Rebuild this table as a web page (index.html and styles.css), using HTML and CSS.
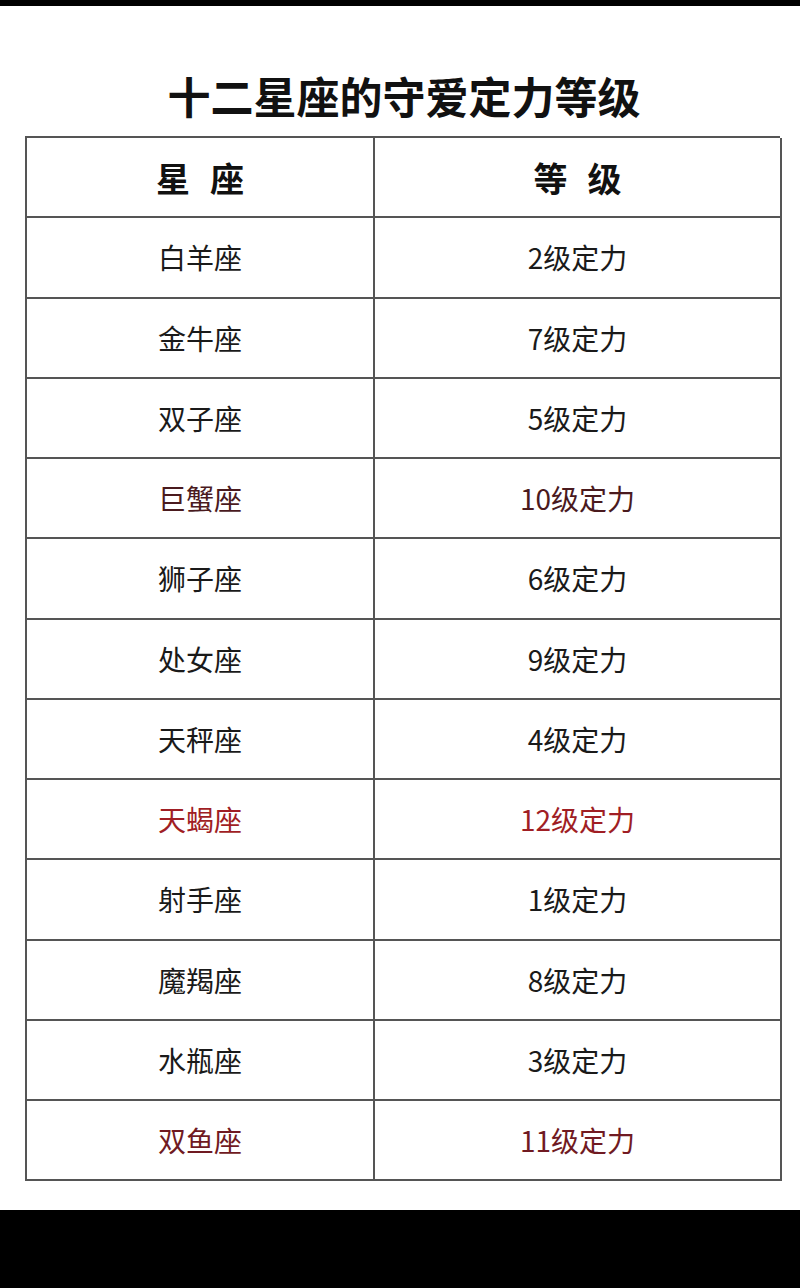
FILE: index.html
```html
<!DOCTYPE html>
<html lang="zh-CN">
<head>
<meta charset="utf-8">
<title>十二星座的守爱定力等级</title>
<link rel="stylesheet" href="styles.css">
</head>
<body>
<div class="topbar"></div>
<main class="page">
  <h1 class="title">十二星座的守爱定力等级</h1>
  <div class="table">
    <div class="cell head"><span>星</span><span>座</span></div>
    <div class="cell head"><span>等</span><span>级</span></div>

    <div class="cell">白羊座</div><div class="cell">2级定力</div>
    <div class="cell">金牛座</div><div class="cell">7级定力</div>
    <div class="cell">双子座</div><div class="cell">5级定力</div>
    <div class="cell cancer">巨蟹座</div><div class="cell cancer">10级定力</div>
    <div class="cell">狮子座</div><div class="cell">6级定力</div>
    <div class="cell">处女座</div><div class="cell">9级定力</div>
    <div class="cell">天秤座</div><div class="cell">4级定力</div>
    <div class="cell scorpio">天蝎座</div><div class="cell scorpio">12级定力</div>
    <div class="cell">射手座</div><div class="cell">1级定力</div>
    <div class="cell">魔羯座</div><div class="cell">8级定力</div>
    <div class="cell">水瓶座</div><div class="cell">3级定力</div>
    <div class="cell pisces">双鱼座</div><div class="cell pisces">11级定力</div>
  </div>
</main>
<div class="bottombar"></div>
</body>
</html>
```

FILE: styles.css
```css
html, body {
  margin: 0;
  padding: 0;
  background: #000;
}
body {
  width: 800px;
  height: 1288px;
  overflow: hidden;
  font-family: "Noto Sans CJK SC", "Noto Sans", sans-serif;
  color: #141414;
}
.topbar {
  height: 6px;
  background: #000;
}
.page {
  background: #fff;
  height: 1204px;
  padding-top: 59px;
  box-sizing: border-box;
}
.title {
  margin: 0;
  padding-left: 8px;
  height: 71px;
  line-height: 60px;
  font-size: 43px;
  font-weight: 700;
  text-align: center;
  color: #111;
}
.table {
  margin-left: 25px;
  width: 755px;
  display: grid;
  grid-template-columns: 348px 407px;
  grid-auto-rows: 80.25px;
  border-top: 2px solid #555;
  border-left: 2px solid #555;
  box-sizing: border-box;
}
.cell {
  display: flex;
  align-items: center;
  justify-content: center;
  border-right: 2px solid #555;
  border-bottom: 2px solid #555;
  font-size: 28px;
  font-weight: 400;
  color: #1a1a1a;
}
.head {
  font-size: 34px;
  font-weight: 700;
  gap: 20px;
  color: #111;
}
.cancer { color: #4a1a1e; }
.scorpio { color: #a01e24; }
.pisces { color: #701a22; }
.bottombar {
  height: 78px;
  background: #000;
}
```
